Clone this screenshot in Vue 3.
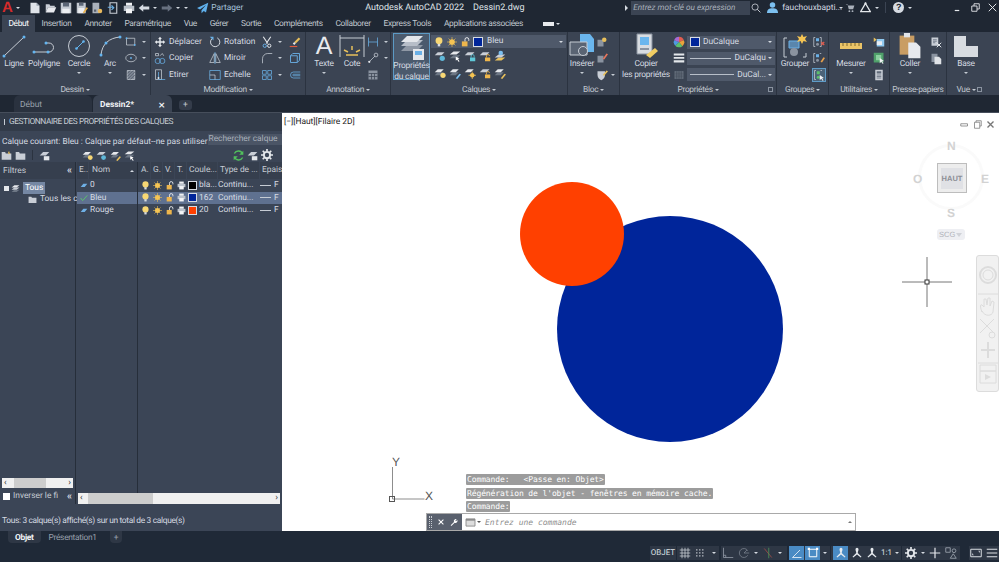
<template>
  <div class="app">
    <!-- symboles réutilisés par les barres d'outils -->
    <svg class="defs" aria-hidden="true">
      <symbol id="new" viewBox="0 0 16 16"><path d="M2 1h8l4 4v10H2z" fill="#dfe3e8"/><path d="M10 1v4h4" fill="#9aa3ae"/></symbol>
      <symbol id="open" viewBox="0 0 16 16"><path d="M1 3h5l1 2h6v2H4l-3 7z" fill="#c9ced6"/><path d="M4 7h11l-3 7H1z" fill="#e8eaee"/></symbol>
      <symbol id="save" viewBox="0 0 16 16"><path d="M1 1h14v14H1z" fill="#c4cad2"/><path d="M4 1h8v5H4z" fill="#5c6676"/><path d="M3 9h10v6H3z" fill="#eceef1"/></symbol>
      <symbol id="saveas" viewBox="0 0 16 16"><path d="M1 1h12v14H1z" fill="#c4cad2"/><path d="M4 1h6v4H4z" fill="#5c6676"/><path d="M3 8h8v7H3z" fill="#eceef1"/><path d="M9 14l5-7 2 1-5 7z" fill="#e8b04a"/></symbol>
      <symbol id="plotsheet" viewBox="0 0 16 16"><path d="M2 1h9v14H2z" fill="#aab1bb"/><path d="M4 10h3v3H4z" fill="#59606c"/><circle cx="12" cy="12" r="3" fill="#e9b95d"/></symbol>
      <symbol id="phone" viewBox="0 0 16 16"><path d="M4 1h9v14H4z" fill="none" stroke="#c9ced6" stroke-width="1.5"/><path d="M1 7h7M6 4.500l3 3-3 3" fill="none" stroke="#6ab0e6" stroke-width="1.600"/></symbol>
      <symbol id="print" viewBox="0 0 16 16"><path d="M4 1h8v4H4z" fill="#eef0f3"/><path d="M1 5h14v7H1z" fill="#b9c0c9"/><path d="M4 9h8v6H4z" fill="#f4f5f7"/></symbol>
      <symbol id="undo" viewBox="0 0 16 16"><path d="M7 3L1 8l6 5v-3h8V6H7z" fill="#d6dbe2"/></symbol>
      <symbol id="redo" viewBox="0 0 16 16"><path d="M9 3l6 5-6 5v-3H1V6h8z" fill="#687180"/></symbol>
      <symbol id="share" viewBox="0 0 16 16"><path d="M15 1L0 8l4 2 8-6-6 7v4l3-3 3 2z" fill="#5fb0ec"/></symbol>
      <symbol id="line" viewBox="0 0 26 26"><path d="M3 23L23 4" stroke="#c6ccd4" fill="none"/><circle cx="3" cy="23" r="1.500" fill="#64b5f0"/><circle cx="23" cy="4" r="1.500" fill="#64b5f0"/></symbol>
      <symbol id="poly" viewBox="0 0 26 26"><path d="M3 19h15a4.500 4.500 0 0 0 0-9h-3" stroke="#c6ccd4" fill="none"/><circle cx="3" cy="19" r="1.500" fill="#64b5f0"/><circle cx="17" cy="19" r="1.500" fill="#64b5f0"/><circle cx="15" cy="10" r="1.500" fill="#64b5f0"/></symbol>
      <symbol id="circle" viewBox="0 0 26 26"><circle cx="13" cy="13" r="10.500" stroke="#c6ccd4" fill="none"/><path d="M11 15l6-6" stroke="#64b5f0"/><circle cx="10.500" cy="15.500" r="1.300" fill="#64b5f0"/><circle cx="17.500" cy="8.500" r="1.300" fill="#64b5f0"/></symbol>
      <symbol id="arc" viewBox="0 0 26 26"><path d="M4 22C5 11 12 5 23 4" stroke="#c6ccd4" fill="none"/><circle cx="4" cy="22" r="1.500" fill="#64b5f0"/><circle cx="9" cy="10" r="1.500" fill="#64b5f0"/><circle cx="23" cy="4" r="1.500" fill="#64b5f0"/></symbol>
      <symbol id="rect" viewBox="0 0 16 16"><path d="M2 3h11v9H2z" fill="none" stroke="#c6ccd4"/><circle cx="2" cy="3" r="1.200" fill="#64b5f0"/><circle cx="13" cy="12" r="1.200" fill="#64b5f0"/></symbol>
      <symbol id="ellipse" viewBox="0 0 16 16"><ellipse cx="8" cy="8" rx="7" ry="5" fill="none" stroke="#c6ccd4"/><circle cx="8" cy="8" r="1.200" fill="#64b5f0"/></symbol>
      <symbol id="hatch" viewBox="0 0 16 16"><path d="M3 2h10v12H3z" fill="#7f8896" stroke="#c6ccd4"/><path d="M3 6l4-4M3 10l8-8M3 14L13 4M7 14l6-6" stroke="#4a5361"/></symbol>
      <symbol id="move" viewBox="0 0 16 16"><path d="M8 1l2.500 3H9v3h3V5.500L15 8l-3 2.500V9H9v3h1.500L8 15l-2.500-3H7V9H4v1.500L1 8l3-2.500V7h3V4H5.500z" fill="#e4e7eb"/></symbol>
      <symbol id="copy" viewBox="0 0 16 16"><circle cx="5" cy="12" r="3.500" fill="none" stroke="#6ab0e6"/><circle cx="11" cy="12" r="3.500" fill="none" stroke="#6ab0e6"/><path d="M2 2h4v3H2zM8 5l3-3 2 3" fill="none" stroke="#c6ccd4"/></symbol>
      <symbol id="stretch" viewBox="0 0 16 16"><path d="M2 1h8v13H2z" fill="none" stroke="#c6ccd4"/><path d="M6 4v10h9" fill="none" stroke="#6ab0e6"/><circle cx="6" cy="12" r="1.300" fill="#e4e7eb"/></symbol>
      <symbol id="rotate" viewBox="0 0 16 16"><path d="M11 2.500A6.200 6.200 0 1 1 4 3.500" fill="none" stroke="#d6dbe2" stroke-width="1.300"/><path d="M1 1h5v5z" fill="#6ab0e6"/></symbol>
      <symbol id="mirror" viewBox="0 0 16 16"><path d="M7 2v12H1zM9 2v12h6z" fill="none" stroke="#c6ccd4"/><path d="M8 0v16" stroke="#6ab0e6"/></symbol>
      <symbol id="scale" viewBox="0 0 16 16"><path d="M1 2h14v12H1z" fill="none" stroke="#6ab0e6"/><path d="M1 8h7v6" fill="none" stroke="#c6ccd4"/></symbol>
      <symbol id="trim" viewBox="0 0 16 16"><path d="M3 1l6 9M13 1L7 10" stroke="#e4e7eb" stroke-width="1.500"/><circle cx="5" cy="13" r="2.200" fill="none" stroke="#6ab0e6" stroke-width="1.300"/><circle cx="11" cy="13" r="2.200" fill="none" stroke="#e4e7eb" stroke-width="1.300"/></symbol>
      <symbol id="erase" viewBox="0 0 16 16"><path d="M7 8l6-6 2 2-6 6z" fill="#e8c05c"/><path d="M5 10l2-2 2 2-2 2z" fill="#e4e7eb"/><path d="M1 14h10" stroke="#e05a3c" stroke-width="1.500"/></symbol>
      <symbol id="fillet" viewBox="0 0 16 16"><path d="M2 15V9a7 7 0 0 1 7-7h6" fill="none" stroke="#c6ccd4"/></symbol>
      <symbol id="cube" viewBox="0 0 16 16"><path d="M2 5h9v9H2zM2 5l3-3h9v9l-3 3" fill="none" stroke="#6ab0e6" stroke-width="1.200"/></symbol>
      <symbol id="array" viewBox="0 0 16 16"><path d="M2 2h5v5H2zM9 2h5v5H9zM2 9h5v5H2zM9 9h5v5H9z" fill="none" stroke="#6ab0e6"/></symbol>
      <symbol id="offset" viewBox="0 0 16 16"><path d="M15 4H6a4 4 0 0 0 0 8h9M15 7H6a1 1 0 0 0 0 2h9" fill="none" stroke="#6ab0e6"/></symbol>
      <symbol id="dim" viewBox="0 0 26 26"><path d="M1 2v22M25 2v22M1 5h24" stroke="#c6ccd4" fill="none"/><path d="M5 17l4 2M13 13v4M21 17l-4 2M7 22h12" stroke="#e8c05c" stroke-width="1.500"/></symbol>
      <symbol id="hdim" viewBox="0 0 16 16"><path d="M2 2v12M14 2v12M2 8h12" stroke="#6ab0e6" fill="none"/></symbol>
      <symbol id="leader" viewBox="0 0 16 16"><path d="M3 13L11 5" stroke="#c6ccd4"/><circle cx="12" cy="4" r="2.500" fill="none" stroke="#c6ccd4"/><circle cx="3" cy="13" r="1.500" fill="#e4e7eb"/></symbol>
      <symbol id="table" viewBox="0 0 16 16"><path d="M2 2h12v12H2z" fill="#8a93a0"/><path d="M2 6h12M2 10h12M6 6v8M10 6v8" stroke="#3b4453"/></symbol>
      <symbol id="bulb" viewBox="0 0 16 16"><circle cx="8" cy="6" r="5.500" fill="#f7d774"/><path d="M6 11h4v4H6z" fill="#d8dde3"/></symbol>
      <symbol id="sun" viewBox="0 0 16 16"><circle cx="8" cy="8" r="4.500" fill="#f5c453"/><path d="M8 0v16M0 8h16M2.500 2.500l11 11M13.500 2.500l-11 11" stroke="#f5c453"/></symbol>
      <symbol id="lock" viewBox="0 0 16 16"><path d="M3 7h9v8H3z" fill="#eeb64c"/><path d="M8 7V4a3 3 0 0 1 6 0v2" fill="none" stroke="#f2f3f5" stroke-width="1.500"/></symbol>
      <symbol id="layer" viewBox="0 0 16 16"><path d="M1 14l5-4h9l-5 4z" fill="#6d7785"/><path d="M1 10l5-4h9l-5 4z" fill="#c9ced6"/><path d="M1 6l5-4h9l-5 4z" fill="#e6e8ec"/></symbol>
      <symbol id="lay-dot" viewBox="0 0 16 16"><path d="M1 7l4-4h9l-4 4z" fill="#c9ced6"/><circle cx="11" cy="11" r="3.500" fill="#5fb7d8"/></symbol>
      <symbol id="lay-arrow" viewBox="0 0 16 16"><path d="M1 11l5-4h9l-5 4z" fill="#6d7785"/><path d="M1 6l5-4h9l-5 4z" fill="#e6e8ec"/><path d="M9 9l5 2-2 1 2 3-1 1-2-3-2 1z" fill="#fff"/></symbol>
      <symbol id="lay-lock" viewBox="0 0 16 16"><path d="M1 7l4-4h9l-4 4z" fill="#c9ced6"/><path d="M8 10h7v5H8z" fill="#5fc8d8"/><path d="M9.500 10V8a2 2 0 0 1 4 0v2" fill="none" stroke="#5fc8d8"/></symbol>
      <symbol id="lay-user" viewBox="0 0 16 16"><path d="M1 14l5-4h9l-5 4z" fill="#e8c05c"/><path d="M1 10l5-4h9l-5 4z" fill="#c9ced6"/><circle cx="9" cy="4" r="3" fill="#7cc0f0"/></symbol>
      <symbol id="lay-bulb" viewBox="0 0 16 16"><path d="M1 11l4-4h8l-4 4z" fill="#6d7785"/><path d="M1 7l4-4h8L9 7z" fill="#e6e8ec"/><circle cx="12" cy="11" r="3.500" fill="#f7d774"/></symbol>
      <symbol id="lay-pen" viewBox="0 0 16 16"><path d="M1 11l4-4h8l-4 4z" fill="#6d7785"/><path d="M1 7l4-4h8L9 7z" fill="#e6e8ec"/><path d="M9 15l5-6 2 1-5 6z" fill="#7cc0f0"/></symbol>
      <symbol id="lay-sun" viewBox="0 0 16 16"><path d="M1 7l4-4h8L9 7z" fill="#e6e8ec"/><circle cx="11" cy="11" r="3" fill="#f5c453"/><path d="M11 6v10M6 11h10" stroke="#f5c453"/></symbol>
      <symbol id="lay-open" viewBox="0 0 16 16"><path d="M1 7l4-4h9l-4 4z" fill="#c9ced6"/><path d="M8 10h7v5H8z" fill="#eeb64c"/><path d="M10 10V8a2 2 0 0 1 4 0" fill="none" stroke="#eeb64c"/></symbol>
      <symbol id="lay-edit" viewBox="0 0 16 16"><path d="M1 11l4-4h8l-4 4z" fill="#6d7785"/><path d="M1 7l4-4h8L9 7z" fill="#e6e8ec"/><path d="M9 15l5-6 2 1-5 6z" fill="#e8c05c"/></symbol>
      <symbol id="layers" viewBox="0 0 26 26"><path d="M2 16l6-6h16l-6 6z" fill="#8f98a5"/><path d="M2 11l6-6h16l-6 6z" fill="#b7bec8"/><path d="M2 7l6-6h16l-6 6z" fill="#e3e6ea"/><path d="M14 14h11v11H14z" fill="#e4e7eb"/><path d="M16 16h7v4h-7z" fill="#6ab0e6"/></symbol>
      <symbol id="insert" viewBox="0 0 26 26"><path d="M11 1h10l4 5v13H11z" fill="#6ab6ee"/><path d="M1 9h17v13H1z" fill="#5a6473" stroke="#c6ccd4"/><circle cx="14" cy="18" r="4.500" fill="#5a6473" stroke="#c6ccd4"/></symbol>
      <symbol id="blockpt" viewBox="0 0 16 16"><path d="M2 5h8v9H2z" fill="#8a93a0"/><circle cx="11" cy="5" r="3" fill="#e8c05c"/></symbol>
      <symbol id="blockedit" viewBox="0 0 16 16"><path d="M2 5h8v9H2z" fill="#8a93a0"/><path d="M9 9l5-7 2 1-5 7z" fill="#e8755c"/></symbol>
      <symbol id="blockshield" viewBox="0 0 16 16"><path d="M2 3h10v5c0 4-3 6-5 7-2-1-5-3-5-7z" fill="#c9ced6"/><path d="M9 8l5-6 2 1-5 6z" fill="#e8c05c"/></symbol>
      <symbol id="match" viewBox="0 0 26 26"><path d="M4 1h15v20H4z" fill="#d8dce1" stroke="#8a93a0"/><path d="M7 4h9v8H7z" fill="#6ab6ee"/><path d="M7 15h9v2H7z" fill="#8a93a0"/><path d="M13 22l9-7 3 3-8 7z" fill="#f0cd63"/></symbol>
      <symbol id="wheel" viewBox="0 0 16 16"><path d="M8 8V1a7 7 0 0 1 6.500 4.500z" fill="#e25d4f"/><path d="M8 8l6.500-2.500A7 7 0 0 1 12.500 13.500z" fill="#e9a23b"/><path d="M8 8l4.500 5.500A7 7 0 0 1 3 13z" fill="#5cc06c"/><path d="M8 8l-5 5A7 7 0 0 1 1.500 5.500z" fill="#4e9ae0"/><path d="M8 8L1.500 5.500A7 7 0 0 1 8 1z" fill="#a86ad4"/></symbol>
      <symbol id="lines" viewBox="0 0 16 16"><path d="M1 2h14v2.500H1zM1 6.500h14v2.500H1zM1 11h14v3H1z" fill="#e4e7eb"/></symbol>
      <symbol id="dots" viewBox="0 0 16 16"><path d="M2 3h12v10H2z" fill="#6d7683"/><path d="M2 5.500h12M2 8h12M2 10.500h12M5 3v10M8 3v10M11 3v10" stroke="#3b4453" stroke-width=".8"/></symbol>
      <symbol id="group" viewBox="0 0 26 26"><path d="M5 5H2v19h3M21 24h3v-4" stroke="#c6ccd4" fill="none"/><path d="M7 8h10v7H7z" fill="#5a86ac" stroke="#6ab0e6"/><circle cx="12" cy="19" r="4" fill="#8b939f"/><path d="M20 1l1.500 3 3.500-1-2 3 2 3-3.500-1L20 11l-1.500-3-3.500 1 2-3-2-3 3.500 1z" fill="#f5c453"/></symbol>
      <symbol id="gexpl" viewBox="0 0 16 16"><path d="M3 2H1v12h2M9 2h2v12H9" stroke="#c6ccd4" fill="none"/><path d="M4 3h4v4H4z" fill="#6ab0e6"/><circle cx="6" cy="11" r="2" fill="#8b939f"/><path d="M11 8l4 4M15 8l-4 4" stroke="#e25d4f" stroke-width="1.500"/></symbol>
      <symbol id="gedit" viewBox="0 0 16 16"><path d="M3 2H1v12h2M9 2h2" stroke="#c6ccd4" fill="none"/><path d="M4 3h4v4H4z" fill="#6ab0e6"/><circle cx="6" cy="11" r="2" fill="#8b939f"/><path d="M10 13l4-6 2 1-4 6z" fill="#e8a04a"/></symbol>
      <symbol id="gsel" viewBox="0 0 16 16"><path d="M4 2H2v12h2M10 2h2" stroke="#c6ccd4" fill="none"/><path d="M5 3h4v4H5z" fill="#5cc06c"/><circle cx="7" cy="11" r="2" fill="#5cc06c"/><path d="M9 8v7l2-2 2 3 1-1-2-2.500 2.500-.5z" fill="#f2f3f5"/></symbol>
      <symbol id="ruler" viewBox="0 0 26 26"><path d="M2 10h22v6H2z" fill="#ebc467"/><path d="M5 10v3M9 10v3M13 10v3M17 10v3M21 10v3" stroke="#7e6a30"/></symbol>
      <symbol id="ut1" viewBox="0 0 16 16"><path d="M5 4h10v10H5z" fill="#8fc8ef"/><path d="M1 2l4 3-4 3z" fill="#e8c05c"/><path d="M5 7h7v5H5z" fill="#e8edf2"/></symbol>
      <symbol id="ut2" viewBox="0 0 16 16"><path d="M1 1h13v13H1z" fill="#4fa06a"/><path d="M4 4h7v7H4z" fill="#8bd09e"/><path d="M9 8v7l2-2 2 3 1-1-2-2.500 2.500-.5z" fill="#f2f3f5"/></symbol>
      <symbol id="calc" viewBox="0 0 16 16"><path d="M3 1h10v14H3z" fill="#c9ced6"/><path d="M5 3h6v3H5z" fill="#5f6a79"/><path d="M5 8h6M5 10h6M5 12h6" stroke="#5f6a79"/></symbol>
      <symbol id="paste" viewBox="0 0 26 30"><path d="M1 3h17v22H1z" fill="#c99d63"/><path d="M6 0h7v5H6z" fill="#e2e4e8"/><path d="M11 11h9l5 5v13H11z" fill="#e8eaee"/></symbol>
      <symbol id="cut" viewBox="0 0 16 16"><path d="M2 2h9v11H2z" fill="#c9ced6"/><path d="M4 5h5M4 7h5M4 9h3" stroke="#5f6a79"/><path d="M9 9l6 6M15 9l-6 6" stroke="#e4e7eb" stroke-width="1.300"/></symbol>
      <symbol id="cbcopy" viewBox="0 0 16 16"><path d="M2 1h8v11H2z" fill="#8a93a0"/><path d="M6 5h6l3 3v7H6z" fill="#e0e3e7"/></symbol>
      <symbol id="base" viewBox="0 0 26 24"><path d="M1 2h12v10h12v11H1z" fill="#d8dce1"/></symbol>
      <symbol id="grid" viewBox="0 0 16 16"><path d="M4 1v14M8 1v14M12 1v14M1 4h14M1 8h14M1 12h14" stroke="#cfd4da"/></symbol>
      <symbol id="snap" viewBox="0 0 16 16"><path d="M3 3h1.500v1.500H3zM7 3h1.500v1.500H7zM11 3h1.500v1.500H11zM3 7h1.500v1.500H3zM7 7h1.500v1.500H7zM11 7h1.500v1.500H11zM3 11h1.500v1.500H3zM7 11h1.500v1.500H7zM11 11h1.500v1.500H11z" fill="#dde1e6"/></symbol>
      <symbol id="ortho" viewBox="0 0 16 16"><path d="M2 1v13h13" fill="none" stroke="#9aa2ad"/><path d="M2 11h3v3" fill="none" stroke="#9aa2ad"/></symbol>
      <symbol id="polar" viewBox="0 0 16 16"><path d="M13 5a6 6 0 1 0 0 6" fill="none" stroke="#7d8692"/><path d="M8 8h7M8 8l4-4" stroke="#7d8692"/></symbol>
      <symbol id="osnap" viewBox="0 0 16 16"><path d="M3 2l10 12" stroke="#b05048"/><path d="M9 1v14" stroke="#4f9a5a"/></symbol>
      <symbol id="isoline" viewBox="0 0 16 16"><path d="M2 14h12M2 14L12 4" fill="none" stroke="#fff"/></symbol>
      <symbol id="obox" viewBox="0 0 16 16"><path d="M3 3h10v10H3z" fill="none" stroke="#fff" stroke-width="1.300"/><path d="M1 1h3v3H1zM12 1h3v3h-3z" fill="#fff"/></symbol>
      <symbol id="anno" viewBox="0 0 16 16"><path d="M8 1a2 2 0 0 1 2 2c0 2-1 3-1 5l5 5-1 1-5-4-5 4-1-1 5-5C7 6 6 5 6 3a2 2 0 0 1 2-2z" fill="#e7ebef"/></symbol>
      <symbol id="gear" viewBox="0 0 16 16"><circle cx="8" cy="8" r="4.200" fill="none" stroke="#e4e7eb" stroke-width="2.600"/><path d="M8 0v3M8 13v3M0 8h3M13 8h3M2.300 2.300l2.100 2.100M11.600 11.600l2.100 2.100M13.700 2.300l-2.100 2.100M4.400 11.600l-2.100 2.100" stroke="#e4e7eb" stroke-width="2.200"/></symbol>
      <symbol id="plus" viewBox="0 0 16 16"><path d="M8 1v14M1 8h14" stroke="#e4e7eb" stroke-width="1.600"/></symbol>
      <symbol id="iso" viewBox="0 0 16 16"><path d="M1 1h6v6H1zM11 9l4 6H7z" fill="none" stroke="#aab1bb"/><circle cx="12" cy="5" r="2.500" fill="none" stroke="#aab1bb"/></symbol>
      <symbol id="screen" viewBox="0 0 16 16"><path d="M1 3h14v10H1z" fill="none" stroke="#dde1e6" stroke-width="1.300"/><path d="M3 8l2 3H3zM13 8l-2-3h2z" fill="#dde1e6"/></symbol>
      <symbol id="menu" viewBox="0 0 16 16"><path d="M1 3h14M1 8h14M1 13h14" stroke="#dde1e6" stroke-width="1.500"/></symbol>
      <symbol id="folder" viewBox="0 0 16 16"><path d="M1 3h5l1 2h8v9H1z" fill="#c9ced6"/></symbol>
      <symbol id="folderadd" viewBox="0 0 16 16"><path d="M1 3h5l1 2h8v9H1z" fill="#c9ced6"/><path d="M10 1l1 2 2-1-1 2 2 1-3 1z" fill="#e8c05c"/></symbol>
      <symbol id="laylock" viewBox="0 0 16 16"><path d="M1 8l5-5h9l-5 5z" fill="#c9ced6"/><path d="M7 9h8v6H7z" fill="#e4e7eb"/></symbol>
      <symbol id="refresh" viewBox="0 0 16 16"><path d="M14 6a6.500 6.500 0 0 0-12-1M2 10a6.500 6.500 0 0 0 12 1" fill="none" stroke="#52c05c" stroke-width="2"/><path d="M15 1v6H9zM1 15V9h6z" fill="#52c05c"/></symbol>
      <symbol id="printer" viewBox="0 0 16 16"><path d="M4 1h8v4H4z" fill="#eef0f3"/><path d="M1 5h14v6H1z" fill="#bcc3cc"/><path d="M4 9h8v6H4z" fill="#f4f5f7"/></symbol>
    </svg>

    <header class="titlebar">
      <span class="logo">A</span>
      <span class="caret light logo-caret"></span>
      <svg v-for="q in quickIcons" :key="q" class="qa"><use :href="'#' + q" /></svg>
      <svg class="qa q-undo"><use href="#undo" /></svg>
      <span class="caret light"></span>
      <svg class="qa q-redo"><use href="#redo" /></svg>
      <span class="caret light"></span>
      <span class="caret light q-more"></span>
      <svg class="qa q-share"><use href="#share" /></svg>
      <span class="share">Partager</span>
      <span class="doc-title"><b>Autodesk AutoCAD 2022</b><b>Dessin2.dwg</b></span>
      <span class="arrow-r"></span>
      <em class="search">Entrez mot-clé ou expression</em>
      <svg class="mag" viewBox="0 0 16 16"><circle cx="6.500" cy="6.500" r="5" fill="none" stroke="#c9ced6" stroke-width="1.300"/><path d="M10 10l5 5" stroke="#c9ced6" stroke-width="1.500"/></svg>
      <svg class="user" viewBox="0 0 16 16"><circle cx="8" cy="4.500" r="4" fill="#7cc0f0"/><path d="M0 16c0-5 3-7 8-7s8 2 8 7z" fill="#7cc0f0"/></svg>
      <span class="username">fauchouxbapti...</span>
      <span class="caret light"></span>
      <svg class="cart" viewBox="0 0 16 16"><path d="M1 2h3l2 8h7l2-6H5" fill="#aab1bb"/><circle cx="7" cy="13" r="1.500" fill="#aab1bb"/><circle cx="12" cy="13" r="1.500" fill="#aab1bb"/></svg>
      <svg class="tri" viewBox="0 0 16 16"><path d="M8 2L1 14h14z" fill="none" stroke="#e4e7eb" stroke-width="1.800"/><circle cx="8" cy="2" r="1.600" fill="#e4e7eb"/></svg>
      <span class="caret light"></span>
      <span class="vsep"></span>
      <span class="help">?</span>
      <span class="caret light"></span>
      <svg class="win win-min" viewBox="0 0 12 12"><path d="M1 10h6" stroke="#e4e7eb" stroke-width="1.600"/></svg>
      <svg class="win" viewBox="0 0 12 12"><path d="M1 4h7v7H1zM4 4V1h7v7H8" fill="none" stroke="#e4e7eb" stroke-width="1.200"/></svg>
      <svg class="win win-last" viewBox="0 0 12 12"><path d="M1 1l10 10M11 1L1 11" stroke="#e4e7eb" stroke-width="1.300"/></svg>
    </header>

    <nav class="tabs">
      <span v-for="(t, i) in ribbonTabs" :key="t" class="tab" :class="{ on: i === 0 }">{{ t }}</span>
      <span class="tab-extra"></span>
      <span class="caret light"></span>
    </nav>

    <section class="ribbon">
      <div class="panel p-dessin">
        <div class="body">
          <div class="big w28"><svg class="ic26"><use href="#line" /></svg><span>Ligne</span></div>
          <div class="big w32"><svg class="ic26"><use href="#poly" /></svg><span>Polyligne</span></div>
          <div class="big w38"><svg class="ic26"><use href="#circle" /></svg><span>Cercle</span><i class="caret"></i></div>
          <div class="big w24"><svg class="ic26"><use href="#arc" /></svg><span>Arc</span><i class="caret"></i></div>
          <div class="col col-dessin">
            <div class="row"><svg class="ic12"><use href="#rect" /></svg><i class="caret"></i></div>
            <div class="row"><svg class="ic12"><use href="#ellipse" /></svg><i class="caret"></i></div>
            <div class="row"><svg class="ic12"><use href="#hatch" /></svg><i class="caret"></i></div>
          </div>
        </div>
        <div class="ptitle">Dessin <i class="caret"></i></div>
      </div>

      <div class="panel p-modif">
        <div class="body">
          <div class="col col-m1">
            <div class="row"><svg class="ic12"><use href="#move" /></svg>Déplacer</div>
            <div class="row"><svg class="ic12"><use href="#copy" /></svg>Copier</div>
            <div class="row"><svg class="ic12"><use href="#stretch" /></svg>Etirer</div>
          </div>
          <div class="col col-m2">
            <div class="row"><svg class="ic12"><use href="#rotate" /></svg>Rotation</div>
            <div class="row"><svg class="ic12"><use href="#mirror" /></svg>Miroir</div>
            <div class="row"><svg class="ic12"><use href="#scale" /></svg>Echelle</div>
          </div>
          <div class="col col-m3">
            <div class="row"><svg class="ic12"><use href="#trim" /></svg><i class="caret"></i></div>
            <div class="row"><svg class="ic12"><use href="#fillet" /></svg><i class="caret"></i></div>
            <div class="row"><svg class="ic12"><use href="#array" /></svg><i class="caret"></i></div>
          </div>
          <div class="col">
            <div class="row"><svg class="ic12"><use href="#erase" /></svg></div>
            <div class="row"><svg class="ic12"><use href="#cube" /></svg></div>
            <div class="row"><svg class="ic12"><use href="#offset" /></svg></div>
          </div>
        </div>
        <div class="ptitle">Modification <i class="caret"></i></div>
      </div>

      <div class="panel p-anno">
        <div class="body">
          <div class="big w32 first-anno"><span class="big-a">A</span><span>Texte</span><i class="caret"></i></div>
          <div class="big w24"><svg class="ic26"><use href="#dim" /></svg><span>Cote</span></div>
          <div class="col col-anno">
            <div class="row"><svg class="ic12"><use href="#hdim" /></svg><i class="caret"></i></div>
            <div class="row"><svg class="ic12"><use href="#leader" /></svg><i class="caret"></i></div>
            <div class="row"><svg class="ic12"><use href="#table" /></svg></div>
          </div>
        </div>
        <div class="ptitle">Annotation <i class="caret"></i></div>
      </div>

      <div class="panel p-calques">
        <div class="body">
          <div class="big layer-btn"><svg class="ic26"><use href="#layers" /></svg><span>Propriétés<br />du calque</span></div>
          <div class="layer-side">
            <div class="combo combo-layer">
              <svg class="ic10"><use href="#bulb" /></svg>
              <svg class="ic10"><use href="#sun" /></svg>
              <svg class="ic10"><use href="#lock" /></svg>
              <span class="swatch blue"></span>
              <span class="combo-txt">Bleu</span>
              <i class="caret light push"></i>
            </div>
            <div class="icon-line">
              <svg v-for="id in layerIconsA" :key="id" class="ic12"><use :href="'#' + id" /></svg>
            </div>
            <div class="icon-line">
              <svg v-for="id in layerIconsB" :key="id" class="ic12"><use :href="'#' + id" /></svg>
            </div>
          </div>
        </div>
        <div class="ptitle">Calques <i class="caret"></i></div>
      </div>

      <div class="panel p-bloc">
        <div class="body">
          <div class="big w28"><svg class="ic26"><use href="#insert" /></svg><span>Insérer</span><i class="caret"></i></div>
          <div class="col">
            <div class="row"><svg class="ic12"><use href="#blockpt" /></svg></div>
            <div class="row"><svg class="ic12"><use href="#blockedit" /></svg></div>
            <div class="row"><svg class="ic12"><use href="#blockshield" /></svg><i class="caret"></i></div>
          </div>
        </div>
        <div class="ptitle">Bloc <i class="caret"></i></div>
      </div>

      <div class="panel p-props">
        <div class="body">
          <div class="big w52"><svg class="ic26"><use href="#match" /></svg><span>Copier<br />les propriétés</span></div>
          <div class="col col-props">
            <div class="row"><svg class="ic12"><use href="#wheel" /></svg><div class="combo"><span class="swatch blue"></span><span class="combo-txt">DuCalque</span><i class="caret light push"></i></div></div>
            <div class="row"><svg class="ic12"><use href="#lines" /></svg><div class="combo"><span class="dash"></span><span class="combo-txt">DuCalqu</span><i class="caret light"></i></div></div>
            <div class="row"><svg class="ic12"><use href="#dots" /></svg><div class="combo"><span class="dash"></span><span class="combo-txt">DuCal...</span><i class="caret light"></i></div></div>
          </div>
        </div>
        <div class="ptitle">Propriétés <i class="caret"></i><span class="launch"></span></div>
      </div>

      <div class="panel p-groupes">
        <div class="body">
          <div class="big w34"><svg class="ic26"><use href="#group" /></svg><span>Grouper</span></div>
          <div class="col">
            <div class="row"><svg class="ic12"><use href="#gexpl" /></svg></div>
            <div class="row"><svg class="ic12"><use href="#gedit" /></svg></div>
            <div class="row sel"><svg class="ic12"><use href="#gsel" /></svg></div>
          </div>
        </div>
        <div class="ptitle">Groupes <i class="caret"></i></div>
      </div>

      <div class="panel p-util">
        <div class="body">
          <div class="big w44"><svg class="ic26"><use href="#ruler" /></svg><span>Mesurer</span><i class="caret"></i></div>
          <div class="col">
            <div class="row"><svg class="ic12"><use href="#ut1" /></svg></div>
            <div class="row"><svg class="ic12"><use href="#ut2" /></svg></div>
            <div class="row"><svg class="ic12"><use href="#calc" /></svg></div>
          </div>
        </div>
        <div class="ptitle">Utilitaires <i class="caret"></i></div>
      </div>

      <div class="panel p-press">
        <div class="body">
          <div class="big w40"><svg class="ic26"><use href="#paste" /></svg><span>Coller</span><i class="caret"></i></div>
          <div class="col">
            <div class="row"><svg class="ic12"><use href="#cut" /></svg></div>
            <div class="row"><svg class="ic12"><use href="#cbcopy" /></svg></div>
          </div>
        </div>
        <div class="ptitle">Presse-papiers</div>
      </div>

      <div class="panel p-vue">
        <div class="body">
          <div class="big w38"><svg class="ic26"><use href="#base" /></svg><span>Base</span><i class="caret"></i></div>
        </div>
        <div class="ptitle">Vue <i class="caret"></i><span class="launch"></span></div>
      </div>
    </section>

    <div class="doctabs">
      <span class="doctab">Début</span>
      <span class="doctab on">Dessin2*<b>×</b></span>
      <span class="docplus">+</span>
    </div>

    <main class="main">
      <aside class="layers">
        <div class="lp-head"><i></i>GESTIONNAIRE DES PROPRIÉTÉS DES CALQUES</div>
        <div class="lp-current">
          <span class="lp-cur-txt">Calque courant: Bleu : Calque par défaut--ne pas utiliser</span>
          <span class="lp-search">Rechercher calque
            <svg viewBox="0 0 16 16"><circle cx="6.500" cy="6.500" r="5" fill="none" stroke="#c9ced6" stroke-width="1.500"/><path d="M10 10l5 5" stroke="#c9ced6" stroke-width="1.600"/></svg>
          </span>
        </div>
        <div class="lp-tools">
          <svg class="ic11"><use href="#folderadd" /></svg>
          <svg class="ic11"><use href="#folder" /></svg>
          <span class="tool-sep"></span>
          <svg class="ic11"><use href="#laylock" /></svg>
          <span class="tool-gap"></span>
          <svg v-for="id in layerTools" :key="id" class="ic11"><use :href="'#' + id" /></svg>
          <svg class="ic11 push"><use href="#refresh" /></svg>
          <svg class="ic11"><use href="#laylock" /></svg>
          <svg class="ic12"><use href="#gear" /></svg>
        </div>

        <div class="lp-body">
          <div class="filters">
            <div class="fhead">Filtres <b>«</b></div>
            <div class="tree-root"><span class="minus"></span><svg class="ic9"><use href="#layer" /></svg><span class="tree-sel">Tous</span></div>
            <div class="tree-child"><svg class="ic9"><use href="#folder" /></svg><span>Tous les ca</span></div>
            <div class="hscroll short"><i>‹</i><span></span><i>›</i></div>
            <div class="invert"><span class="check"></span>Inverser le fi<b>«</b></div>
          </div>
          <div class="grid-wrap">
            <div class="grids">
              <div class="names">
                <div class="cell-h"><span class="c-e">E..</span><span class="c-n">Nom<i class="up"></i></span></div>
                <div v-for="l in layerRows" :key="l.name" class="name-row" :class="{ cur: l.cur }">
                  <span class="state">
                    <svg v-if="l.cur" viewBox="0 0 12 12"><path d="M1 6l3 4 7-8" fill="none" stroke="#5cc06c" stroke-width="1.500"/></svg>
                    <svg v-else viewBox="0 0 12 12"><path d="M1 9l4-5h6L7 9z" fill="#6fb0e6"/></svg>
                  </span>{{ l.name }}
                </div>
              </div>
              <div class="attrs">
                <div class="attr-h">
                  <span>A.</span><span>G.</span><span>V.</span><span>T.</span><span>Coule...</span><span>Type de ...</span><span>Epais</span>
                </div>
                <div v-for="l in layerRows" :key="l.name" class="attr-row" :class="{ cur: l.cur }">
                  <span><svg class="ic9"><use href="#bulb" /></svg></span>
                  <span><svg class="ic9"><use href="#sun" /></svg></span>
                  <span><svg class="ic9"><use href="#lock" /></svg></span>
                  <span><svg class="ic9"><use href="#printer" /></svg></span>
                  <span class="color"><i class="chip" :style="{ background: l.color }"></i>{{ l.label }}</span>
                  <span>Continu...</span>
                  <span class="thick"><i></i>F</span>
                </div>
              </div>
            </div>
            <div class="hscroll long"><i>‹</i><span></span><i>›</i></div>
          </div>
        </div>
        <div class="lp-status">Tous: 3 calque(s) affiché(s) sur un total de 3 calque(s)</div>
      </aside>

      <div class="canvas">
        <!-- le dessin lui-même : cercles, SCU et réticule -->
        <svg class="drawing" viewBox="0 0 717 418">
          <circle cx="388" cy="216" r="113" fill="#00259a" />
          <circle cx="290" cy="121" r="52" fill="#ff4000" />
          <path d="M110.500 386V354M110.500 386h32" stroke="#8d8d8d" fill="none" />
          <rect x="107.500" y="383.500" width="5" height="5" fill="none" stroke="#555" />
          <text x="143" y="387" class="ucs">X</text>
          <text x="110" y="353" class="ucs">Y</text>
          <path d="M645 144V194M620 169H670" stroke="#777" fill="none" />
          <rect x="643" y="167" width="4" height="4" fill="#fff" stroke="#333" />
        </svg>
        <div class="viewtag">[−][Haut][Filaire 2D]</div>
        <div class="winbtns">
          <svg viewBox="0 0 12 12"><path d="M1 5h9v3H1z" fill="none" stroke="#777"/></svg>
          <svg viewBox="0 0 12 12"><path d="M2 3h7v8H2zM4 3V1h7v7H9" fill="none" stroke="#777"/></svg>
          <svg viewBox="0 0 12 12"><path d="M2 2l8 8M10 2l-8 8" stroke="#777" stroke-width="1.800"/></svg>
        </div>
        <div class="viewcube">
          <div class="ring"></div>
          <span class="vn">N</span><span class="vo">O</span><span class="ve">E</span><span class="vs">S</span>
          <div class="cube"><b>HAUT</b></div>
          <div class="scg">SCG <i></i></div>
        </div>
        <div class="navbar">
          <svg viewBox="0 0 22 134">
            <circle cx="11" cy="19" r="8" fill="none" stroke="#dcdcdc" stroke-width="2"/>
            <circle cx="11" cy="19" r="5" fill="none" stroke="#dcdcdc"/>
            <path d="M1 38h20M1 107h20" stroke="#dcdcdc"/>
            <path d="M5 56c-2-5-2-8 0-7l2 2V43l2 0 1 6 1-7 2 0v8l2-5 2 1-1 10c-1 4-8 5-11-1z" fill="none" stroke="#dcdcdc"/>
            <path d="M3 63l14 14M17 63L3 77" stroke="#dcdcdc"/>
            <circle cx="15" cy="79" r="3" fill="none" stroke="#dcdcdc"/>
            <path d="M11 86v16M4 94h14" stroke="#dcdcdc" stroke-width="2"/>
            <path d="M3 109h16v6H3zM3 115h16v12H3z" fill="none" stroke="#dcdcdc"/>
            <path d="M8 118l6 3-6 3z" fill="#dcdcdc"/>
          </svg>
        </div>
        <div class="history">
          <p><span>Commande:&nbsp;&nbsp;&nbsp;&lt;Passe en: Objet&gt;</span></p>
          <p><span>Régénération de l'objet - fenêtres en mémoire cache.</span></p>
          <p><span>Commande:</span></p>
        </div>
        <div class="cmdline">
          <div class="cmd-left">
            <span class="grip"></span>
            <svg viewBox="0 0 10 10"><path d="M2 2l6 6M8 2L2 8" stroke="#fff" stroke-width="1.300"/></svg>
            <svg viewBox="0 0 12 12"><path d="M1 11l5-5a3 3 0 0 1 4-4L8 4l1 1 2-2a3 3 0 0 1-4 4l-5 5z" fill="#fff"/></svg>
          </div>
          <svg class="cmd-icon" viewBox="0 0 12 10"><path d="M1 1h10v8H1z" fill="#ddd" stroke="#8b8b8b"/><path d="M1 1h10v2H1z" fill="#8b8b8b"/></svg>
          <i class="caret dark"></i>
          <span class="cmd-ph">Entrez une commande</span>
          <i class="caret-up"></i>
        </div>
      </div>
    </main>

    <footer class="bottom">
      <div class="layouts">
        <span class="lt on">Objet</span>
        <span class="lt">Présentation1</span>
        <span class="lt plus">+</span>
      </div>
      <div class="status">
        <span class="sgroup g-obj">OBJET</span>
        <span class="sgroup g-grid">
          <svg class="st"><use href="#grid" /></svg><svg class="st"><use href="#snap" /></svg><i class="caret light"></i>
        </span>
        <span class="sgroup g-ortho">
          <svg class="st"><use href="#ortho" /></svg><svg class="st"><use href="#polar" /></svg><i class="caret light"></i>
          <svg class="st"><use href="#osnap" /></svg><i class="caret light"></i>
        </span>
        <span class="sgroup g-act">
          <span class="act"><svg class="st"><use href="#isoline" /></svg></span>
          <span class="act"><svg class="st"><use href="#obox" /></svg></span><i class="caret light"></i>
        </span>
        <span class="sgroup g-anno">
          <span class="act"><svg class="st"><use href="#anno" /></svg></span>
          <svg class="st"><use href="#anno" /></svg><svg class="st"><use href="#anno" /></svg>
          <span class="ratio">1:1</span><i class="caret light"></i>
        </span>
        <span class="sgroup g-gear">
          <svg class="st"><use href="#gear" /></svg><i class="caret light"></i>
          <svg class="st"><use href="#plus" /></svg><svg class="st"><use href="#iso" /></svg>
        </span>
        <span class="sgroup g-end">
          <svg class="st"><use href="#screen" /></svg><svg class="st"><use href="#menu" /></svg>
        </span>
      </div>
    </footer>
  </div>
</template>

<script setup>
const quickIcons = ["new", "open", "save", "saveas", "plotsheet", "phone", "print"];

const ribbonTabs = [
  "Début",
  "Insertion",
  "Annoter",
  "Paramétrique",
  "Vue",
  "Gérer",
  "Sortie",
  "Compléments",
  "Collaborer",
  "Express Tools",
  "Applications associées",
];

const layerIconsA = ["lay-dot", "lay-arrow", "lay-lock", "lay-open", "lay-user"];
const layerIconsB = ["lay-bulb", "lay-pen", "lay-sun", "lay-open", "lay-edit"];
const layerTools = ["lay-bulb", "lay-dot", "lay-edit", "lay-arrow"];

const layerRows = [
  { name: "0", color: "#000", label: "bla..." },
  { name: "Bleu", color: "#00259a", label: "162", cur: true },
  { name: "Rouge", color: "#ff4000", label: "20" },
];
</script>

<style>
html,
body {
  margin: 0;
  background: #1f2733;
}
</style>

<style scoped>
.app {
  width: 999px;
  height: 562px;
  overflow: hidden;
  display: flex;
  flex-direction: column;
  background: #1f2733;
  color: #d6dbe2;
  font-family: Roboto, "Noto Sans", sans-serif;
  font-size: 8.4px;
  line-height: 1;
  text-rendering: geometricPrecision;
}
.defs {
  position: absolute;
  width: 0;
  height: 0;
}
svg {
  display: block;
  flex: none;
}
.push {
  margin-left: auto;
}

/* barre de titre */
.titlebar {
  height: 15px;
  display: flex;
  align-items: center;
  background: #1f2733;
}
.logo {
  width: 15px;
  text-align: center;
  color: #d62b2b;
  font: bold 15px "Liberation Sans", sans-serif;
}
.logo-caret {
  margin: 0 9px 0 1px;
}
.qa {
  width: 12px;
  height: 12px;
  margin-right: 3.6px;
}
.q-undo {
  margin-right: 2.5px;
}
.q-redo {
  margin: 0 2.5px 0 4.5px;
}
.q-more {
  margin-left: 4px;
}
.q-share {
  margin: 0 2px 0 9.5px;
}
.share {
  color: #a8c4dc;
  width: 154px;
  padding-top: 2px;
}
.doc-title {
  width: 260px;
  display: flex;
  gap: 9px;
  font-size: 9px;
  color: #dfe3e8;
  padding-top: 2px;
}
.doc-title b {
  font-weight: 400;
}
.arrow-r {
  width: 0;
  height: 0;
  border-left: 3px solid #d6dbe2;
  border-top: 3px solid transparent;
  border-bottom: 3px solid transparent;
  margin-right: 3px;
}
.search {
  width: 117px;
  height: 14px;
  line-height: 14px;
  padding-left: 2px;
  background: #3b4453;
  color: #aab1bb;
  font-size: 8.2px;
}
.mag {
  width: 10px;
  height: 10px;
  margin-left: 1px;
}
.user {
  width: 11px;
  height: 11px;
  margin-left: 6px;
}
.username {
  margin-left: 4px;
  width: 57px;
  white-space: nowrap;
  padding-top: 2px;
}
.cart {
  width: 10px;
  height: 10px;
  margin-left: 2px;
}
.tri {
  width: 11px;
  height: 11px;
  margin: 0 4px 0 5px;
}
.vsep {
  width: 1px;
  height: 11px;
  background: #3b4453;
  margin: 0 7px 0 6px;
}
.help {
  width: 11px;
  height: 11px;
  border-radius: 50%;
  background: #d6dbe2;
  color: #1f2733;
  font: bold 9px/11px "Liberation Sans", sans-serif;
  text-align: center;
  margin: 0 4px 0 0;
}
.win {
  width: 9px;
  height: 9px;
  margin-right: 8px;
}
.win-min {
  margin-left: auto;
}
.win-last {
  margin-right: 2px;
}

/* onglets du ruban */
.tabs {
  height: 17px;
  display: flex;
  align-items: stretch;
  padding-left: 2px;
}
.tab {
  padding: 0 6.4px;
  line-height: 19px;
  color: #c1c7cf;
  white-space: nowrap;
  letter-spacing: -0.32px;
}
.tab.on {
  background: #3b4453;
  color: #fff;
}
.tab-extra {
  width: 11px;
  height: 4px;
  background: #e8eaee;
  margin: 7px 2px 0 14px;
}
.tabs .caret {
  margin-top: 8px;
}

/* ruban */
.ribbon {
  height: 63px;
  display: flex;
  background: #3b4453;
  flex: none;
}
.panel {
  display: flex;
  flex-direction: column;
  border-right: 1px solid #2b3340;
  box-sizing: border-box;
  flex: none;
}
.p-dessin { width: 151px; }
.p-modif { width: 155px; }
.p-anno { width: 85px; }
.p-calques { width: 177px; }
.p-bloc { width: 52px; }
.p-props { width: 157px; }
.p-groupes { width: 52px; }
.p-util { width: 61px; }
.p-press { width: 57px; }
.p-vue { width: 38px; border-right: 0; }
.body {
  height: 51px;
  display: flex;
}
.ptitle {
  height: 12px;
  line-height: 14px;
  text-align: center;
  color: #c1c7cf;
  position: relative;
  white-space: nowrap;
  letter-spacing: -0.3px;
}
.big {
  display: flex;
  flex-direction: column;
  align-items: center;
  padding-top: 1px;
  flex: none;
  line-height: 11px;
  text-align: center;
  white-space: nowrap;
  letter-spacing: -0.2px;
}
.big .caret {
  margin-top: 2px;
}
.w24 { width: 24px; }
.w28 { width: 28px; }
.w32 { width: 32px; }
.w34 { width: 36px; }
.w38 { width: 38px; }
.w40 { width: 40px; }
.w44 { width: 44px; }
.w52 { width: 52px; }
.first-anno {
  margin-left: 2px;
}
.big-a {
  height: 26px;
  font: 25px/26px "Liberation Sans", sans-serif;
  color: #e8eaee;
}
.ic26 {
  width: 26px;
  height: 26px;
}
.ic12 {
  width: 12px;
  height: 12px;
}
.ic10 {
  width: 10px;
  height: 10px;
}
.ic11 {
  width: 11px;
  height: 11px;
}
.ic9 {
  width: 9px;
  height: 9px;
}
.col {
  display: flex;
  flex-direction: column;
  flex: none;
  padding-top: 2px;
}
.row {
  height: 16.4px;
  display: flex;
  align-items: center;
  gap: 3px;
  white-space: nowrap;
}
.col-dessin {
  margin-left: 3px;
  width: 23px;
}
.col-dessin .caret,
.col-m3 .caret,
.col-anno .caret {
  margin-left: 2px;
}
.col-m1 {
  width: 58px;
  padding-left: 3px;
  box-sizing: border-box;
}
.col-m2 {
  width: 52px;
}
.col-m3 {
  width: 28px;
}
.col-anno {
  margin-left: 3px;
}
.sel svg {
  outline: 1px solid #5f9cc8;
  background: #4c6378;
}
.layer-btn {
  width: 37px;
  height: 47px;
  margin: 1px 1px 0 2px;
  box-sizing: border-box;
  background: #4b5a6d;
  border: 1px solid #5c9ac4;
  line-height: 10.5px;
}
.layer-side {
  width: 135px;
  padding-top: 3px;
}
.combo {
  height: 13px;
  background: #4f596a;
  display: flex;
  align-items: center;
  gap: 2px;
  padding: 0 3px;
  flex: 1;
  box-sizing: border-box;
  overflow: hidden;
}
.combo-layer {
  flex: none;
  gap: 3px;
}
.combo-txt {
  white-space: nowrap;
  margin-left: 1px;
}
.swatch {
  width: 8px;
  height: 8px;
  border: 1px solid #d6dbe2;
  flex: none;
}
.blue {
  background: #00259a;
}
.dash {
  flex: 1;
  height: 1px;
  background: #b8bfc9;
}
.icon-line {
  height: 16.4px;
  display: flex;
  align-items: center;
  gap: 3px;
  padding-left: 3px;
}
.col-props {
  width: 104px;
  padding-left: 1px;
  box-sizing: border-box;
}
.col-props .row {
  gap: 2px;
}
.col-props .combo {
  flex: none;
  width: 88px;
}
.launch {
  position: absolute;
  right: 3px;
  top: 4px;
  width: 5px;
  height: 5px;
  border: 1px solid #8a93a0;
  box-sizing: border-box;
}

.caret {
  display: inline-block;
  width: 0;
  height: 0;
  border-left: 2.5px solid transparent;
  border-right: 2.5px solid transparent;
  border-top: 2.5px solid #c6ccd4;
  vertical-align: middle;
  flex: none;
}
.caret.light {
  border-top-color: #d6dbe2;
}
.caret.dark {
  border-top-color: #555;
}

/* onglets de documents */
.doctabs {
  height: 18px;
  display: flex;
  align-items: stretch;
  padding-left: 14px;
  gap: 1px;
  background: #1f2733;
  flex: none;
  border-bottom: 1px solid #464e5b;
  box-sizing: border-box;
}
.doctab {
  width: 78px;
  padding: 4px 0 0 6px;
  line-height: 13px;
  color: #9aa2ad;
  background: #2a323f;
  border-radius: 6px 6px 0 0;
  box-sizing: border-box;
}
.doctab.on {
  width: 79px;
  background: #3b4453;
  color: #f1f3f5;
  font-weight: 700;
  padding: 4px 7px 0;
  display: flex;
  justify-content: space-between;
}
.doctab b {
  font-weight: 400;
  font-size: 12px;
}
.docplus {
  margin-left: 6px;
  width: 13px;
  height: 10px;
  margin-top: 5px;
  background: #343c4a;
  text-align: center;
  color: #c1c7cf;
  border-radius: 3px;
  line-height: 10px;
}

.main {
  height: 418px;
  display: flex;
  flex: none;
}

/* palette des calques */
.layers {
  width: 282px;
  display: flex;
  flex-direction: column;
  background: #3b4556;
  flex: none;
}
.lp-head {
  height: 18px;
  display: flex;
  align-items: center;
  padding-left: 4px;
  gap: 4px;
  background: #323b49;
  color: #c6ccd4;
  letter-spacing: -0.45px;
}
.lp-head i {
  width: 1px;
  height: 6px;
  background: #c6ccd4;
}
.lp-current {
  height: 17px;
  display: flex;
  justify-content: space-between;
  padding-left: 2px;
  color: #d6dbe2;
  white-space: nowrap;
}
.lp-cur-txt {
  padding-top: 7px;
}
.lp-search {
  width: 83px;
  height: 11px;
  margin-top: 3px;
  line-height: 11px;
  background: #4b5566;
  color: #aab1bb;
  display: flex;
  justify-content: space-between;
  align-items: center;
  padding: 0 1px;
  box-sizing: border-box;
  flex: none;
}
.lp-search svg {
  width: 8px;
  height: 8px;
}
.lp-tools {
  height: 14px;
  display: flex;
  align-items: center;
  gap: 3px;
  padding: 0 9px 0 1px;
}
.tool-sep {
  width: 1px;
  height: 10px;
  background: #2b3340;
  margin: 0 3px;
}
.tool-gap {
  width: 26px;
}
.lp-body {
  flex: 1;
  display: flex;
  min-height: 0;
}
.filters {
  width: 75px;
  display: flex;
  flex-direction: column;
  flex: none;
  border-right: 1px solid #262e3a;
  box-sizing: content-box;
}
.fhead {
  height: 17px;
  line-height: 18px;
  padding: 0 3px;
  display: flex;
  justify-content: space-between;
  color: #c6ccd4;
  background: #363f4e;
}
.fhead b,
.invert b {
  font-size: 10px;
  color: #d6dbe2;
}
.tree-root {
  display: flex;
  align-items: center;
  height: 12px;
  margin-top: 3px;
  padding-left: 4px;
  gap: 2px;
}
.minus {
  width: 5px;
  height: 5px;
  background: #e4e7eb;
}
.tree-sel {
  background: #7587a3;
  color: #fff;
  padding: 2px;
  margin-left: 1px;
}
.tree-child {
  display: flex;
  align-items: center;
  gap: 3px;
  height: 11px;
  padding-left: 28px;
  white-space: nowrap;
}
.hscroll {
  height: 10px;
  background: #f0f0f0;
  color: #333;
  display: flex;
  align-items: center;
  justify-content: space-between;
  font-size: 9px;
  padding: 0 2px;
  box-sizing: border-box;
  flex: none;
}
.hscroll i {
  font-style: normal;
}
.hscroll span {
  height: 100%;
}
.hscroll.short {
  width: 71px;
  margin: 273px 0 0 2px;
}
.hscroll.short span {
  width: 32px;
  margin: 0 auto 0 7px;
  background: #cdcdcd;
}
.invert {
  height: 15px;
  display: flex;
  align-items: center;
  padding: 2px 3px 0;
  gap: 3px;
  white-space: nowrap;
  color: #c6ccd4;
  box-sizing: border-box;
}
.invert b {
  margin-left: auto;
}
.check {
  width: 7px;
  height: 7px;
  background: #fff;
}
.grid-wrap {
  flex: 1;
  display: flex;
  flex-direction: column;
  min-width: 0;
}
.grids {
  height: 331px;
  display: flex;
}
.names {
  width: 61px;
  margin-left: 1px;
  flex: none;
  border-right: 1px solid #262e3a;
  box-sizing: border-box;
}
.cell-h,
.attr-h {
  height: 17px;
  display: flex;
  align-items: center;
  color: #c6ccd4;
  background: #363f4e;
}
.c-e {
  width: 12px;
  padding-left: 2px;
  flex: none;
  box-sizing: border-box;
  line-height: 17px;
  border-right: 1px solid #3b4556;
}
.c-n {
  flex: 1;
  padding: 0 3px;
  display: flex;
  justify-content: space-between;
  align-items: center;
}
.up {
  width: 0;
  height: 0;
  border-left: 2.5px solid transparent;
  border-right: 2.5px solid transparent;
  border-bottom: 2.5px solid #d6dbe2;
}
.name-row {
  height: 12.5px;
  display: flex;
  align-items: center;
  color: #d6dbe2;
}
.name-row.cur,
.attr-row.cur {
  background: #5f7190;
}
.state {
  width: 13px;
  padding-left: 3px;
  box-sizing: border-box;
  flex: none;
}
.state svg {
  width: 8px;
  height: 8px;
}
.attrs {
  flex: 1;
  min-width: 0;
  overflow: hidden;
}
.attr-h span,
.attr-row span {
  flex: none;
  white-space: nowrap;
  box-sizing: border-box;
}
.attr-h span {
  padding-left: 2px;
  line-height: 17px;
  border-right: 1px solid #3b4556;
}
.attr-h span:nth-child(-n + 4),
.attr-row span:nth-child(-n + 4) {
  width: 12px;
}
.attr-h span:nth-child(5),
.attr-row span:nth-child(5) {
  width: 31px;
}
.attr-h span:nth-child(6),
.attr-row span:nth-child(6) {
  width: 42px;
}
.attr-h span:nth-child(7),
.attr-row span:nth-child(7) {
  width: 23px;
}
.attr-row {
  height: 12.5px;
  display: flex;
  align-items: center;
  padding-left: 1px;
}
.attr-h {
  padding-left: 1px;
}
.attr-row span:nth-child(-n + 4) {
  padding-left: 1.5px;
}
.color {
  display: flex;
  align-items: center;
  gap: 2px;
  padding-left: 1px;
}
.chip {
  width: 7px;
  height: 7px;
  border: 1px solid #d6dbe2;
  flex: none;
}
.thick {
  display: flex;
  align-items: center;
  gap: 3px;
}
.thick i {
  width: 11px;
  height: 1px;
  background: #c6ccd4;
  flex: none;
}
.hscroll.long {
  width: 202px;
  height: 11px;
  margin: 0 0 0 2px;
}
.hscroll.long span {
  width: 65px;
  margin: 0 auto 0 5px;
  background: #cdcdcd;
}
.lp-status {
  height: 27px;
  padding-top: 11px;
  line-height: 12px;
  padding-left: 2px;
  color: #d6dbe2;
  box-sizing: border-box;
  flex: none;
  letter-spacing: -0.33px;
}

/* zone de dessin */
.canvas {
  flex: 1;
  position: relative;
  background: #fff;
  overflow: hidden;
}
.drawing {
  position: absolute;
  inset: 0;
  width: 717px;
  height: 418px;
}
.ucs {
  font: 12px "Liberation Sans", sans-serif;
  fill: #555;
}
.viewtag {
  position: absolute;
  left: 2px;
  top: 5px;
  color: #222;
}
.winbtns {
  position: absolute;
  right: 4px;
  top: 7px;
  display: flex;
  gap: 4px;
}
.winbtns svg {
  width: 9px;
  height: 9px;
}
.viewcube {
  position: absolute;
  left: 627px;
  top: 25px;
  width: 84px;
  height: 105px;
  color: #d2d2d2;
  font: 700 12px "Liberation Sans", sans-serif;
}
.viewcube span {
  position: absolute;
}
.ring {
  position: absolute;
  left: 9px;
  top: 6px;
  width: 66px;
  height: 66px;
  border: 3px solid #fafafa;
  border-radius: 50%;
  box-sizing: border-box;
}
.vn { left: 38px; top: 1px; }
.vo { left: 4px; top: 34px; }
.ve { left: 72px; top: 34px; }
.vs { left: 38px; top: 68px; }
.cube {
  position: absolute;
  left: 28px;
  top: 25px;
  width: 30px;
  height: 30px;
  background: #ededed;
  border: 1px solid #bdbdbd;
  box-sizing: border-box;
  display: flex;
  align-items: center;
  justify-content: center;
}
.cube b {
  background: #e0e1e5;
  color: #8c8f96;
  padding: 6px 1px;
  font-size: 7.5px;
}
.scg {
  position: absolute;
  left: 28px;
  top: 91px;
  width: 28px;
  height: 11px;
  border-radius: 3px;
  background: #eeeff3;
  color: #aeb1b8;
  font: 7.5px/11px "Liberation Sans", sans-serif;
  padding-left: 2px;
  box-sizing: border-box;
}
.scg i {
  position: absolute;
  right: 3px;
  top: 4px;
  width: 0;
  height: 0;
  border-left: 3px solid transparent;
  border-right: 3px solid transparent;
  border-top: 4px solid #d0d2d8;
}
.navbar {
  position: absolute;
  left: 694px;
  top: 142px;
  width: 23px;
  height: 137px;
  box-sizing: border-box;
  background: #f1f1f1;
  border: 1px solid #dcdcdc;
  border-radius: 3px;
}
.navbar svg {
  width: 22px;
  height: 134px;
}
.history {
  position: absolute;
  left: 184px;
  top: 360px;
  font: 8px/13.500px "DejaVu Sans Mono", "Liberation Mono", monospace;
  letter-spacing: -0.1px;
  color: #fff;
  white-space: pre;
}
.history p {
  margin: 0;
}
.history span {
  background: #9c9c9c;
  padding: 1px;
  border-radius: 1px;
}
.cmdline {
  position: absolute;
  left: 144px;
  top: 400px;
  width: 430px;
  height: 18px;
  display: flex;
  align-items: center;
  background: #fff;
  border: 1px solid #a9a9a9;
  box-sizing: border-box;
}
.cmd-left {
  width: 35px;
  height: 100%;
  background: #59606d;
  display: flex;
  align-items: center;
  gap: 5px;
  padding-left: 2px;
  box-sizing: border-box;
  margin-right: 3px;
}
.cmd-left svg {
  width: 8px;
  height: 8px;
}
.grip {
  width: 3px;
  height: 12px;
  border-left: 1px dotted #c8ccd2;
  border-right: 1px dotted #c8ccd2;
  box-sizing: border-box;
}
.cmd-icon {
  width: 11px;
  height: 9px;
  margin-right: 1px;
}
.cmd-ph {
  margin-left: 4px;
  font: italic 8px "DejaVu Sans Mono", monospace;
  color: #8d8d8d;
}
.caret-up {
  margin-left: auto;
  margin-right: 3px;
  width: 0;
  height: 0;
  border-left: 2.5px solid transparent;
  border-right: 2.5px solid transparent;
  border-bottom: 2.5px solid #777;
}

/* barre d'état */
.bottom {
  flex: 1;
  background: #1f2937;
  display: flex;
  flex-direction: column;
}
.layouts {
  height: 13px;
  display: flex;
  padding-left: 8px;
  gap: 1px;
}
.lt {
  height: 12px;
  line-height: 14px;
  padding: 0 7px;
  color: #98a0ac;
  border-radius: 0 0 4px 4px;
  letter-spacing: -0.3px;
}
.lt.on {
  background: #2e3745;
  color: #f1f3f5;
  font-weight: 700;
}
.lt.plus {
  background: #2e3745;
  padding: 0 4px;
  margin-left: 5px;
}
.status {
  height: 18px;
  display: flex;
  align-items: center;
  padding-left: 650px;
  gap: 1px;
}
.sgroup {
  height: 14px;
  background: #2e3745;
  display: flex;
  align-items: center;
  color: #dde1e6;
  box-sizing: border-box;
  flex: none;
}
.g-obj { width: 26px; justify-content: center; font-size: 8px; }
.g-grid { width: 42px; padding-left: 2px; gap: 3px; }
.g-grid .caret { margin-left: 3px; }
.g-ortho { width: 66px; padding-left: 1px; gap: 4px; margin-left: 1px; }
.g-act { width: 41px; gap: 1px; margin-left: 1px; }
.g-act .caret { margin-left: 2px; }
.g-anno { width: 70px; padding-left: 2px; gap: 3px; }
.g-gear { width: 58px; padding-left: 3px; gap: 4px; }
.g-end { width: 30px; padding-left: 1px; gap: 4px; margin-left: 8px; }
.st {
  width: 12px;
  height: 12px;
}
.act {
  background: #4a8bc4;
  height: 14px;
  display: flex;
  align-items: center;
  padding: 0 1.5px;
}
.ratio {
  font-size: 8px;
}
</style>
